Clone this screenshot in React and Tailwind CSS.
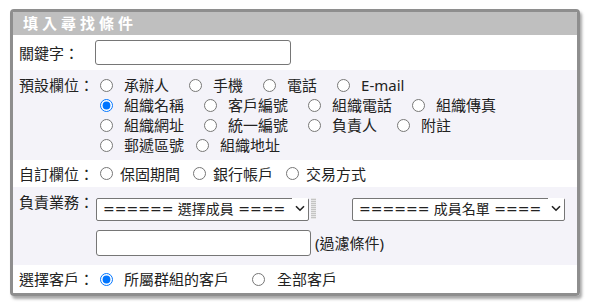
import { useState } from 'react'

const font = { fontFamily: '"Noto Sans", "Noto Sans CJK TC", sans-serif' }
const selectFont = { fontFamily: '"DejaVu Sans", "Noto Sans CJK TC", sans-serif' }

function Radio({ name, label, checked, textGap = 'ml-[11px]', className = '' }) {
  return (
    <label className={`inline-flex items-center whitespace-nowrap ${className}`}>
      <input type="radio" name={name} defaultChecked={checked} className="m-0 w-[13px] h-[13px] shrink-0" />
      <span className={textGap}>{label}</span>
    </label>
  )
}

function Chevron() {
  return (
    <span className="absolute right-[1px] top-[1px] w-[16px] h-[21px] bg-white pointer-events-none flex items-center justify-center">
      <svg width="10" height="7" viewBox="0 0 10 7">
        <path d="M1 1.2 L5 5.2 L9 1.2" fill="none" stroke="#222" strokeWidth="1.6" />
      </svg>
    </span>
  )
}

function Select({ text }) {
  return (
    <div className="relative w-[213px] h-[23px]">
      <select
        className="appearance-none w-full h-full border border-[#767676] rounded-[2px] bg-white pl-[6px] pr-[18px] text-[14px] leading-[20px] text-[#222] overflow-hidden"
        style={selectFont}
        defaultValue="a"
      >
        <option value="a">{text}</option>
      </select>
      <Chevron />
    </div>
  )
}

function Grip() {
  const ticks = []
  for (let y = 1; y < 20; y += 2) ticks.push(<line key={y} x1="0" x2="5" y1={y + 0.5} y2={y + 0.5} stroke="#c4c4c4" strokeWidth="1" />)
  return (
    <svg width="5" height="21" viewBox="0 0 5 21" className="ml-[2px] shrink-0">
      <rect x="0" y="0" width="5" height="21" fill="#e6e6e6" />
      {ticks}
    </svg>
  )
}

export default function App() {
  const [keyword, setKeyword] = useState('')

  return (
    <div className="min-h-screen bg-white pt-[9px] pl-[10px] text-[#222]" style={font}>
      <div className="w-[570px] border-[3px] border-[#8e8e8e] rounded-[4px] shadow-[2px_3px_3px_rgba(0,0,0,0.35)] overflow-hidden text-[15px]">
        {/* header */}
        <div className="h-[23px] bg-[#bfbfbf] pl-[10px] text-[15px] leading-[23px] font-bold tracking-[4px] text-white">
          填入尋找條件
        </div>

        {/* keyword */}
        <div className="h-[35px] flex items-center bg-white">
          <div className="w-[82px] pl-[6px] leading-[20px]">關鍵字：</div>
          <input
            value={keyword}
            onChange={(e) => setKeyword(e.target.value)}
            className="w-[196px] h-[25px] border border-[#767676] rounded-[3px] bg-white px-1"
          />
        </div>

        {/* preset fields */}
        <div className="flex bg-[#f4f3f9] pt-[5px] pb-[5px] leading-[20px]">
          <div className="w-[82px] pl-[6px]">預設欄位：</div>
          <div className="flex flex-col pl-[5px]">
            <div className="flex h-[20px] gap-[20px]">
              <Radio name="preset" label="承辦人" />
              <Radio name="preset" label="手機" />
              <Radio name="preset" label="電話" />
              <Radio name="preset" label="E-mail" />
            </div>
            <div className="flex h-[20px] gap-[20px]">
              <Radio name="preset" label="組織名稱" checked />
              <Radio name="preset" label="客戶編號" />
              <Radio name="preset" label="組織電話" />
              <Radio name="preset" label="組織傳真" />
            </div>
            <div className="flex h-[20px] gap-[20px]">
              <Radio name="preset" label="組織網址" />
              <Radio name="preset" label="統一編號" />
              <Radio name="preset" label="負責人" />
              <Radio name="preset" label="附註" />
            </div>
            <div className="flex h-[20px] gap-[12px]">
              <Radio name="preset" label="郵遞區號" />
              <Radio name="preset" label="組織地址" />
            </div>
          </div>
        </div>

        {/* custom fields */}
        <div className="h-[27px] flex items-center bg-white leading-[20px]">
          <div className="w-[82px] pl-[6px]">自訂欄位：</div>
          <div className="flex pl-[5px] gap-[13px]">
            <Radio name="custom" label="保固期間" textGap="ml-[7px]" />
            <Radio name="custom" label="銀行帳戶" textGap="ml-[7px]" />
            <Radio name="custom" label="交易方式" textGap="ml-[7px]" />
          </div>
        </div>

        {/* owner */}
        <div className="flex bg-[#f4f3f9] h-[78px]">
          <div className="w-[82px] pl-[6px] pt-[5px] leading-[20px]">負責業務：</div>
          <div className="flex flex-col pt-[10px] pl-[1px]">
            <div className="flex items-center">
              <Select text="====== 選擇成員 ====" />
              <Grip />
              <div className="ml-[36px]">
                <Select text="====== 成員名單 ====" />
              </div>
            </div>
            <div className="flex items-center mt-[10px]">
              <input className="w-[215px] h-[26px] border border-[#767676] rounded-[3px] bg-white px-1" />
              <span className="ml-[4px] leading-[20px]">(過濾條件)</span>
            </div>
          </div>
        </div>

        {/* customers */}
        <div className="h-[28px] flex items-center bg-white leading-[20px]">
          <div className="w-[82px] pl-[6px]">選擇客戶：</div>
          <div className="flex pl-[5px] gap-[23px]">
            <Radio name="cust" label="所屬群組的客戶" checked />
            <Radio name="cust" label="全部客戶" textGap="ml-[12px]" />
          </div>
        </div>
      </div>
    </div>
  )
}
